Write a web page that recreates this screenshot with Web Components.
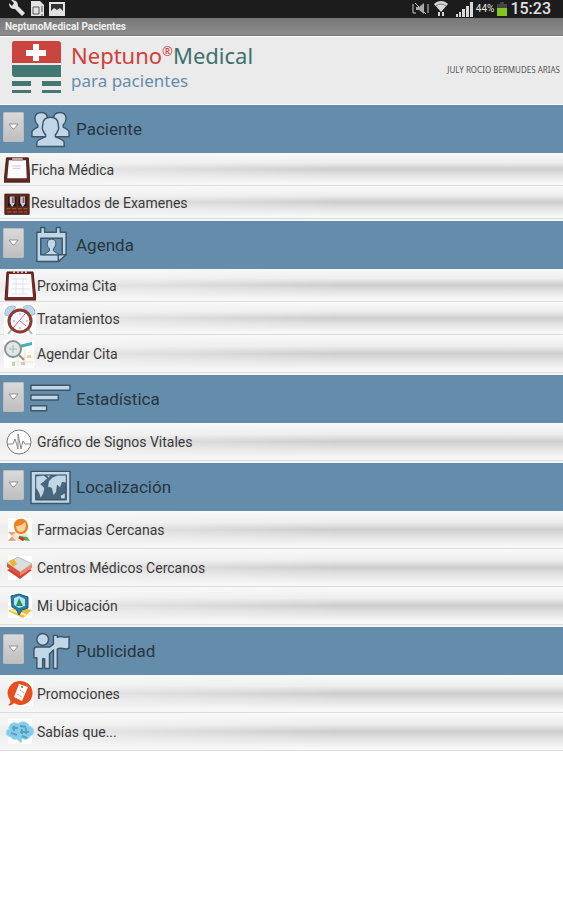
<!DOCTYPE html>
<html lang="es">
<head>
<meta charset="utf-8">
<meta name="viewport" content="width=device-width, initial-scale=1">
<title>NeptunoMedical Pacientes</title>
<style>
  :root {
    --section-bg: #648dab;
    --section-icon: #c1d6e6;
    --section-line: #3c566a;
    --text-dark: #3a3a3a;
    --brand-red: #cf4037;
    --brand-green: #3f716c;
    --brand-blue: #648dab;
  }

  body {
    margin: 0;
    background: #fff;
    color: var(--text-dark);
    font-family: Roboto, "Liberation Sans", sans-serif;
  }
</style>
</head>
<body>
<status-bar time="15:23" battery="44%"></status-bar>
<title-bar>NeptunoMedical Pacientes</title-bar>
<brand-header user="JULY ROCIO BERMUDES ARIAS"></brand-header>

<main>
  <menu-section label="Paciente" icon="people">
    <menu-item icon="clipboard" size="small">Ficha Médica</menu-item>
    <menu-item icon="results" size="small">Resultados de Examenes</menu-item>
  </menu-section>
  <menu-section label="Agenda" icon="agenda">
    <menu-item icon="calendar" size="compact">Proxima Cita</menu-item>
    <menu-item icon="clock" size="compact">Tratamientos</menu-item>
    <menu-item icon="schedule">Agendar Cita</menu-item>
  </menu-section>
  <menu-section label="Estadística" icon="bars">
    <menu-item icon="pulse">Gráfico de Signos Vitales</menu-item>
  </menu-section>
  <menu-section label="Localización" icon="map">
    <menu-item icon="pharmacy">Farmacias Cercanas</menu-item>
    <menu-item icon="centers">Centros Médicos Cercanos</menu-item>
    <menu-item icon="location">Mi Ubicación</menu-item>
  </menu-section>
  <menu-section label="Publicidad" icon="flag">
    <menu-item icon="promo">Promociones</menu-item>
    <menu-item icon="cloud">Sabías que...</menu-item>
  </menu-section>
</main>

<script>
// Iconos de las secciones (40x40)
const SECTION_ICONS = {
  people: `
    <path d="M11 3c4 0 6 3 6 7 0 3-1 5-2 7v2l5 3v6H1v-5c0-2 2-3 6-5v-2c-2-2-3-4-3-7 0-4 3-6 7-6z"/>
    <path d="M29 3c-4 0-6 3-6 7 0 3 1 5 2 7v2l-5 3v6h19v-5c0-2-2-3-6-5v-2c2-2 3-4 3-7 0-4-3-6-7-6z"/>
    <path d="M20 8c5 0 8 3 8 8 0 2 1 3 0 5-1 1-1 3-3 5v2c5 2 9 3 9 6v4H6v-4c0-3 4-4 9-6v-2c-2-2-2-4-3-5-1-2 0-3 0-5 0-5 3-8 8-8z"/>`,
  agenda: `
    <path d="M6 7h4V2h4v5h12V2h4v5h6v22l-8 8H6z"/>
    <path d="M10 13h22v17H10z" fill="#648dab"/>
    <path d="M21 14c4 0 5 3 4 7l-2 3v2l6 4H13l6-4v-2c-2-2-3-4-2-7 0-2 2-3 4-3z" stroke-width="1"/>
    <path d="M28 37v-7h8z"/>`,
  bars: `
    <path d="M0 6h40v5H0zM0 16h28v5H0zM0 27h16v5H0z"/>`,
  map: `
    <path d="M0 4h40v33H0z"/>
    <path d="M5 8h31v25H5z" fill="#48667c"/>
    <path d="M5 9l8-1 4 3-4 4-3 2 4 4-1 5-3 6-2-6-3-5zM18 14l4-4 5-2h9v8l-4-1-2 6-3-3-1 7-3 4-2-8-4-1zM30 29l5-3v6h-4zM16 8h4l-2 3z" stroke-width=".6"/>`,
  flag: `
    <circle cx="12" cy="8" r="6"/>
    <path d="M6 16h13l4-3V4h4v2c4-3 6 2 12-1v12c-5 3-8-2-12 1v20h-4V19l-4 4v15h-5V28h-2v10H6V27H3v-8c0-2 1-3 3-3z"/>`
};

// Iconos de las opciones (32x32)
const ITEM_ICONS = {
  clipboard: `
    <path d="M3 1h27l2 30H0z" fill="#612722" stroke="#321713"/>
    <path d="M6 4h21l1 22H4z" fill="#fcfcff"/>
    <path d="M10 1h13v4H10z" fill="#bcaaa3"/>
    <path d="M10 11h11M11 14h9" stroke="#b6c1dd"/>`,
  results: `
    <path d="M1 5h30v25H1z" fill="#63271c" stroke="#371b14"/>
    <path d="M5 8h10v12H5zM18 8h10v12H18z" fill="#24161a"/>
    <path d="M7 8h6v9l-3 4-3-5zM20 8h6v9l-3 4-3-5z" fill="#b8d1df"/>
    <path d="M11 9v7M24 9v7" stroke="#c14333" stroke-width="2"/>
    <path d="M3 23h26M4 27h24" stroke="#ba654c" stroke-dasharray="5 2"/>`,
  calendar: `
    <path d="M3 2h26l3 28H1z" fill="#7c2925" stroke="#4d1b18"/>
    <path d="M5 4h22l2 23H4z" fill="#fcfcff"/>
    <path d="M8 9h16M8 14h17M7 19h19M7 24h17M12 8v16M19 8v16" stroke="#dde3ef"/>
    <path d="M9 2h14" stroke="#d1b8b3" stroke-width="2" stroke-dasharray="2 2"/>`,
  clock: `
    <path d="M0 2h32v30H0z" fill="#fff"/>
    <path d="M1 12c-1-7 5-11 11-8l-7 9zM19 4c7-4 12 0 12 7l-5 2z" fill="#bcd5e9" stroke="#9db9d0"/>
    <path d="M8 26l-4 5M24 26l4 5" stroke="#a9b5bd" stroke-width="2"/>
    <circle cx="16" cy="18" r="11" fill="#f7f8fd" stroke="#8e3931" stroke-width="3"/>
    <path d="M9 25l12-14M16 18l6 5" stroke="#ca6a83"/>
    <path d="M16 10v2M16 24v2M9 18h2M22 18h2" stroke="#9ba5b2"/>`,
  schedule: `
    <path d="M0 2h30v28H0z" fill="#fff"/>
    <path d="M6 6h22l3 22-24 2z" fill="#fbfbf7"/>
    <path d="M15 7l13-3v3l-12 3z" fill="#43b0bc"/>
    <path d="M8 19h21M8 24h21M14 15v14M21 11v17" stroke="#e3e7dd"/>
    <path d="M23 17h4v3h-4z" fill="#f1d594"/>
    <path d="M17 24h4v3h-4z" fill="#edbcb8"/>
    <path d="M8 24h3v4H8z" fill="#bed8ab"/>
    <circle cx="9" cy="11" r="8" fill="#e0e8e8" stroke="#8b9494" stroke-width="2"/>
    <path d="M15 17l5 5" stroke="#8b9494" stroke-width="2"/>
    <path d="M5 11h8M9 7v8" stroke="#a6b3b5"/>`,
  pulse: `
    <circle cx="15" cy="16" r="12" fill="#fff" stroke="#777"/>
    <path d="M4 18h5l2-5 3 10V8l3 15 2-8 2 3h5" fill="none" stroke="#888"/>`,
  pharmacy: `
    <path d="M4 4h24v24H4z" fill="#fff"/>
    <path d="M8 27c0-8 4-11 8-11s9 3 10 11z" fill="#e5ead7"/>
    <path d="M10 12c-1-8 12-11 14-1 1 4-2 9-7 9s-7-4-7-8z" fill="#ec8227"/>
    <path d="M12 12c4 0 7-2 9-4 2 4 0 10-4 10-3 0-5-3-5-6z" fill="#ffd49c"/>
    <path d="M4 18h8l-4 4 4 5H4l4-5z" fill="#eda27e"/>
    <path d="M15 22l8 1 3 4-7-1z" fill="#4aad4b"/>
    <path d="M15 23l5 3" stroke="#d7312b" stroke-width="3"/>`,
  centers: `
    <path d="M4 4h24v24H4z" fill="#fff"/>
    <path d="M3 18l12-6 13 6-12 9z" fill="#d2433a"/>
    <path d="M3 15l12-6 13 5-12 9z" fill="#e6e8e9"/>
    <path d="M3 11l11-6 14 7-12 8z" fill="#d9dee0" stroke="#bbb"/>
    <path d="M3 11l13 9v4L3 15z" fill="#e25237"/>
    <path d="M16 20l12-8v4l-12 8z" fill="#f0876c"/>
    <path d="M5 9l5-2 3 5-4 3z" fill="#f3b329"/>`,
  location: `
    <path d="M4 4h24v24H4z" fill="#fff"/>
    <path d="M4 21l9-4 15 3-9 8z" fill="#e9bd3c"/>
    <path d="M7 20l15 5" stroke="#fff0a0" stroke-width="2"/>
    <path d="M7 6l8-2 9 3v11l-6 2-3 5-3-6-4-2z" fill="#267ea8" stroke="#205c80"/>
    <path d="M10 8l5-2 6 3v7l-6 2-5-3z" fill="#b6e5ed"/>
    <path d="M15 8l4 8h-7z" fill="#299360"/>`,
  promo: `
    <path d="M4 3h25v25H4z" fill="#fff"/>
    <path d="M17 3a12 12 0 1 1-7 22c-2 2-4 3-6 2 2-1 3-3 2-5A12 12 0 0 1 17 3z" fill="#e84f20"/>
    <path d="M15 6l9 3-6 14-8-4z" fill="#fff"/>
    <path d="M13 16l5 3M16 12l4 3" stroke="#ee8565" stroke-dasharray="2 1"/>
    <circle cx="18" cy="9" r="1" fill="#e84f20"/>`,
  cloud: `
    <path d="M4 3h24v25H4z" fill="#fff"/>
    <path d="M7 21c-6-1-6-7-2-8-1-5 5-8 9-5 4-4 10-2 11 2 6 1 6 9 1 10-1 4-6 4-8 2l-1 5-4-4c-3 1-5 0-6-2z" fill="#82cdea" stroke="#9bdbef"/>
    <path d="M8 12h6M16 10l6 1M7 17l6 2M16 16h9M18 20l5 2" stroke="#5c9fc0" stroke-width="2"/>
    <path d="M10 10v5M18 13v5M22 12v6" stroke="#5c9fc0" stroke-width="2"/>`
};

// Barra de estado del dispositivo
class StatusBar extends HTMLElement {
  constructor() {
    super();
    this.attachShadow({ mode: "open" });
  }

  connectedCallback() {
    this.shadowRoot.innerHTML = `
      <style>
        :host {
          display: flex;
          align-items: center;
          justify-content: space-between;
          height: 18px;
          padding: 0 12px 0 8px;
          background: #1c1c1c;
          color: #e2e2e2;
          overflow: hidden;
        }
        .group { display: flex; align-items: center; gap: 3px; }
        .battery { font-size: 10px; line-height: 18px; }
        .time { font-size: 16px; line-height: 18px; font-weight: 500; }
        svg { display: block; }
      </style>
      <div class="group">
        <svg width="60" height="18" fill="#e2e2e2" aria-hidden="true">
          <path d="M3 0l3 3-2 3-3-3c0 5 3 6 6 6l7 7 3-3-7-7c0-4-2-6-7-6z"/>
          <path d="M23 1h9l4 4v11H23z"/>
          <path d="M25 7h6v7h-6zM34 6v6M34 14v2" fill="none" stroke="#555"/>
          <path d="M41 2h16v14H41z"/>
          <path d="M43 4h12v9H43z" fill="#333"/>
          <path d="M43 13v-2l3-3 3 2 3-2 3 3v2z"/>
        </svg>
      </div>
      <div class="group">
        <svg width="61" height="18" fill="#d8d8d8" aria-hidden="true">
          <path d="M1 4v9h3M3 3l11 11M16 4v9" fill="none" stroke="#c8c8c8"/>
          <path d="M4 7h3l5-4v11l-5-4H4z" fill="#a9a9a9"/>
          <path d="M22 4c4-4 10-4 14 0l-7 8z"/>
          <path d="M24 6q5-4 10 0" fill="none" stroke="#777"/>
          <path d="M26 12h2v4h-2zM30 12h2v4h-2z"/>
          <path d="M44 14h2v3h-2zM47 12h2v5h-2zM50 9h3v8h-3zM54 6h3v11h-3zM58 2h3v15h-3z"/>
        </svg>
        <span class="battery">${this.getAttribute("battery")}</span>
        <svg width="10" height="18" aria-hidden="true">
          <path d="M3 2h4v2h3v4H0V4h3z" fill="#454545"/>
          <path d="M0 8h10v8H0z" fill="#85c51d"/>
        </svg>
        <span class="time">${this.getAttribute("time")}</span>
      </div>
    `;
  }
}

// Barra con el nombre de la aplicación
class TitleBar extends HTMLElement {
  constructor() {
    super();
    this.attachShadow({ mode: "open" }).innerHTML = `
      <style>
        :host {
          display: block;
          padding: 0 5px;
          background: linear-gradient(#777, #8c8c8c);
          border-bottom: 1px solid #777;
          color: #eee;
          font-size: 10px;
          font-weight: 700;
          line-height: 17px;
        }
      </style>
      <slot></slot>
    `;
  }
}

// Cabecera con el logotipo y el nombre del paciente
class BrandHeader extends HTMLElement {
  constructor() {
    super();
    this.attachShadow({ mode: "open" });
  }

  connectedCallback() {
    this.shadowRoot.innerHTML = `
      <style>
        :host {
          display: flex;
          align-items: center;
          gap: 10px;
          box-sizing: border-box;
          height: 69px;
          padding: 0 3px 8px 11px;
          background: #ebebeb;
          border-top: 1px solid #fff;
          border-bottom: 1px solid #f8f8f8;
          font-family: "Noto Sans", sans-serif;
        }
        svg { flex: none; }
        .brand { flex: 1; white-space: nowrap; }
        h1 {
          display: flex;
          margin: 0;
          font-size: 22px;
          line-height: 28px;
          font-weight: 400;
          color: var(--brand-green);
        }
        .red { color: var(--brand-red); }
        sup { font-size: 13px; line-height: 20px; }
        p { margin: 0; font-size: 17px; line-height: 24px; color: var(--brand-blue); }
        .user { padding-top: 6px; font-size: 8px; line-height: 12px; color: #555; }
      </style>
      <svg width="50" height="52" aria-hidden="true">
        <path d="M3 0h44q3 0 3 3v19H1V3q0-3 2-3z" fill="#cb4540"/>
        <path d="M22 3h6v6h7v6h-7v5h-6v-5h-7V9h7z" fill="#fff"/>
        <path d="M1 24h49v12H4q-3 0-3-3zM1 40h19v5H1zM31 40h19v5H31zM1 49h19v3H1zM31 49h19v3H31z" fill="#437772"/>
      </svg>
      <div class="brand">
        <h1><span class="red">Neptuno</span><sup class="red">®</sup><span>Medical</span></h1>
        <p>para pacientes</p>
      </div>
      <span class="user">${this.getAttribute("user")}</span>
    `;
  }
}

/**
 * Sección plegable del menú.
 *
 * Attributes:
 * - label: título de la sección
 * - icon: clave de SECTION_ICONS
 */
class MenuSection extends HTMLElement {
  constructor() {
    super();
    this.attachShadow({ mode: "open" });
    this.handleToggle = this.handleToggle.bind(this);
  }

  connectedCallback() {
    const label = this.getAttribute("label");

    this.shadowRoot.innerHTML = `
      <style>
        :host { display: block; }
        header {
          display: flex;
          align-items: center;
          height: 48px;
          padding-left: 3px;
          background: var(--section-bg);
        }
        button {
          display: grid;
          place-items: center;
          width: 21px;
          height: 30px;
          margin: 0 6px 4px 0;
          padding: 0;
          border: 1px solid #b9bdc0;
          border-radius: 1px;
          background: linear-gradient(#d9d9d9, #bfbfbf);
          cursor: pointer;
        }
        .icon {
          margin-right: 5px;
          fill: var(--section-icon);
          stroke: var(--section-line);
          stroke-width: 1.5;
          stroke-linejoin: round;
        }
        h2 { margin: 0; font-size: 17px; line-height: 24px; font-weight: 400; color: #273640; }
        .items { padding-bottom: 2px; background: #f3f5f6; }
        .items[hidden] { display: none; }
        :host(:last-of-type) .items { padding-bottom: 0; }
      </style>
      <header>
        <button type="button" aria-expanded="true" aria-controls="items" aria-label="${label}">
          <svg width="11" height="8" aria-hidden="true">
            <path d="M1 1h9L6 6H5z" fill="#fff" stroke="#8d9194"/>
          </svg>
        </button>
        <svg class="icon" width="41" height="40" viewBox="-1 0 42 40" aria-hidden="true">${SECTION_ICONS[this.getAttribute("icon")]}</svg>
        <h2>${label}</h2>
      </header>
      <div class="items" id="items"><slot></slot></div>
    `;

    this.shadowRoot
      .querySelector("button")
      .addEventListener("click", this.handleToggle);
  }

  handleToggle() {
    const items = this.shadowRoot.querySelector(".items");
    items.hidden = !items.hidden;
    this.shadowRoot
      .querySelector("button")
      .setAttribute("aria-expanded", String(!items.hidden));
  }
}

/**
 * Opción del menú.
 *
 * Attributes:
 * - icon: clave de ITEM_ICONS
 * - size: "small" (icono y fila menores) o "compact" (fila menor)
 */
class MenuItem extends HTMLElement {
  constructor() {
    super();
    this.attachShadow({ mode: "open" });
  }

  connectedCallback() {
    const icon = this.getAttribute("icon");

    this.shadowRoot.innerHTML = `
      <style>
        :host { display: block; --row-height: 38px; --icon-size: 32px; }
        :host([size]) { --row-height: 33px; }
        :host([size="small"]) { --icon-size: 26px; }
        a {
          display: flex;
          align-items: center;
          gap: 1px;
          box-sizing: border-box;
          height: var(--row-height);
          padding: 1px 0 0 4px;
          border-bottom: 1px solid #dcdcdc;
          background:
            linear-gradient(to right, rgba(245, 245, 245, .8), rgba(245, 245, 245, 0) 60%),
            linear-gradient(#fafafa, #ededed 30%, #cdcdcd 50%, #dedede 65%, #f8f8f8 95%);
          color: var(--text-dark);
          font-size: 14px;
          line-height: 18px;
          text-decoration: none;
        }
        svg { flex: none; width: var(--icon-size); height: var(--icon-size); }
      </style>
      <a href="#${icon}">
        <svg viewBox="0 0 32 32" aria-hidden="true">${ITEM_ICONS[icon]}</svg>
        <span><slot></slot></span>
      </a>
    `;
  }
}

customElements.define("status-bar", StatusBar);
customElements.define("title-bar", TitleBar);
customElements.define("brand-header", BrandHeader);
customElements.define("menu-section", MenuSection);
customElements.define("menu-item", MenuItem);
</script>
</body>
</html>
